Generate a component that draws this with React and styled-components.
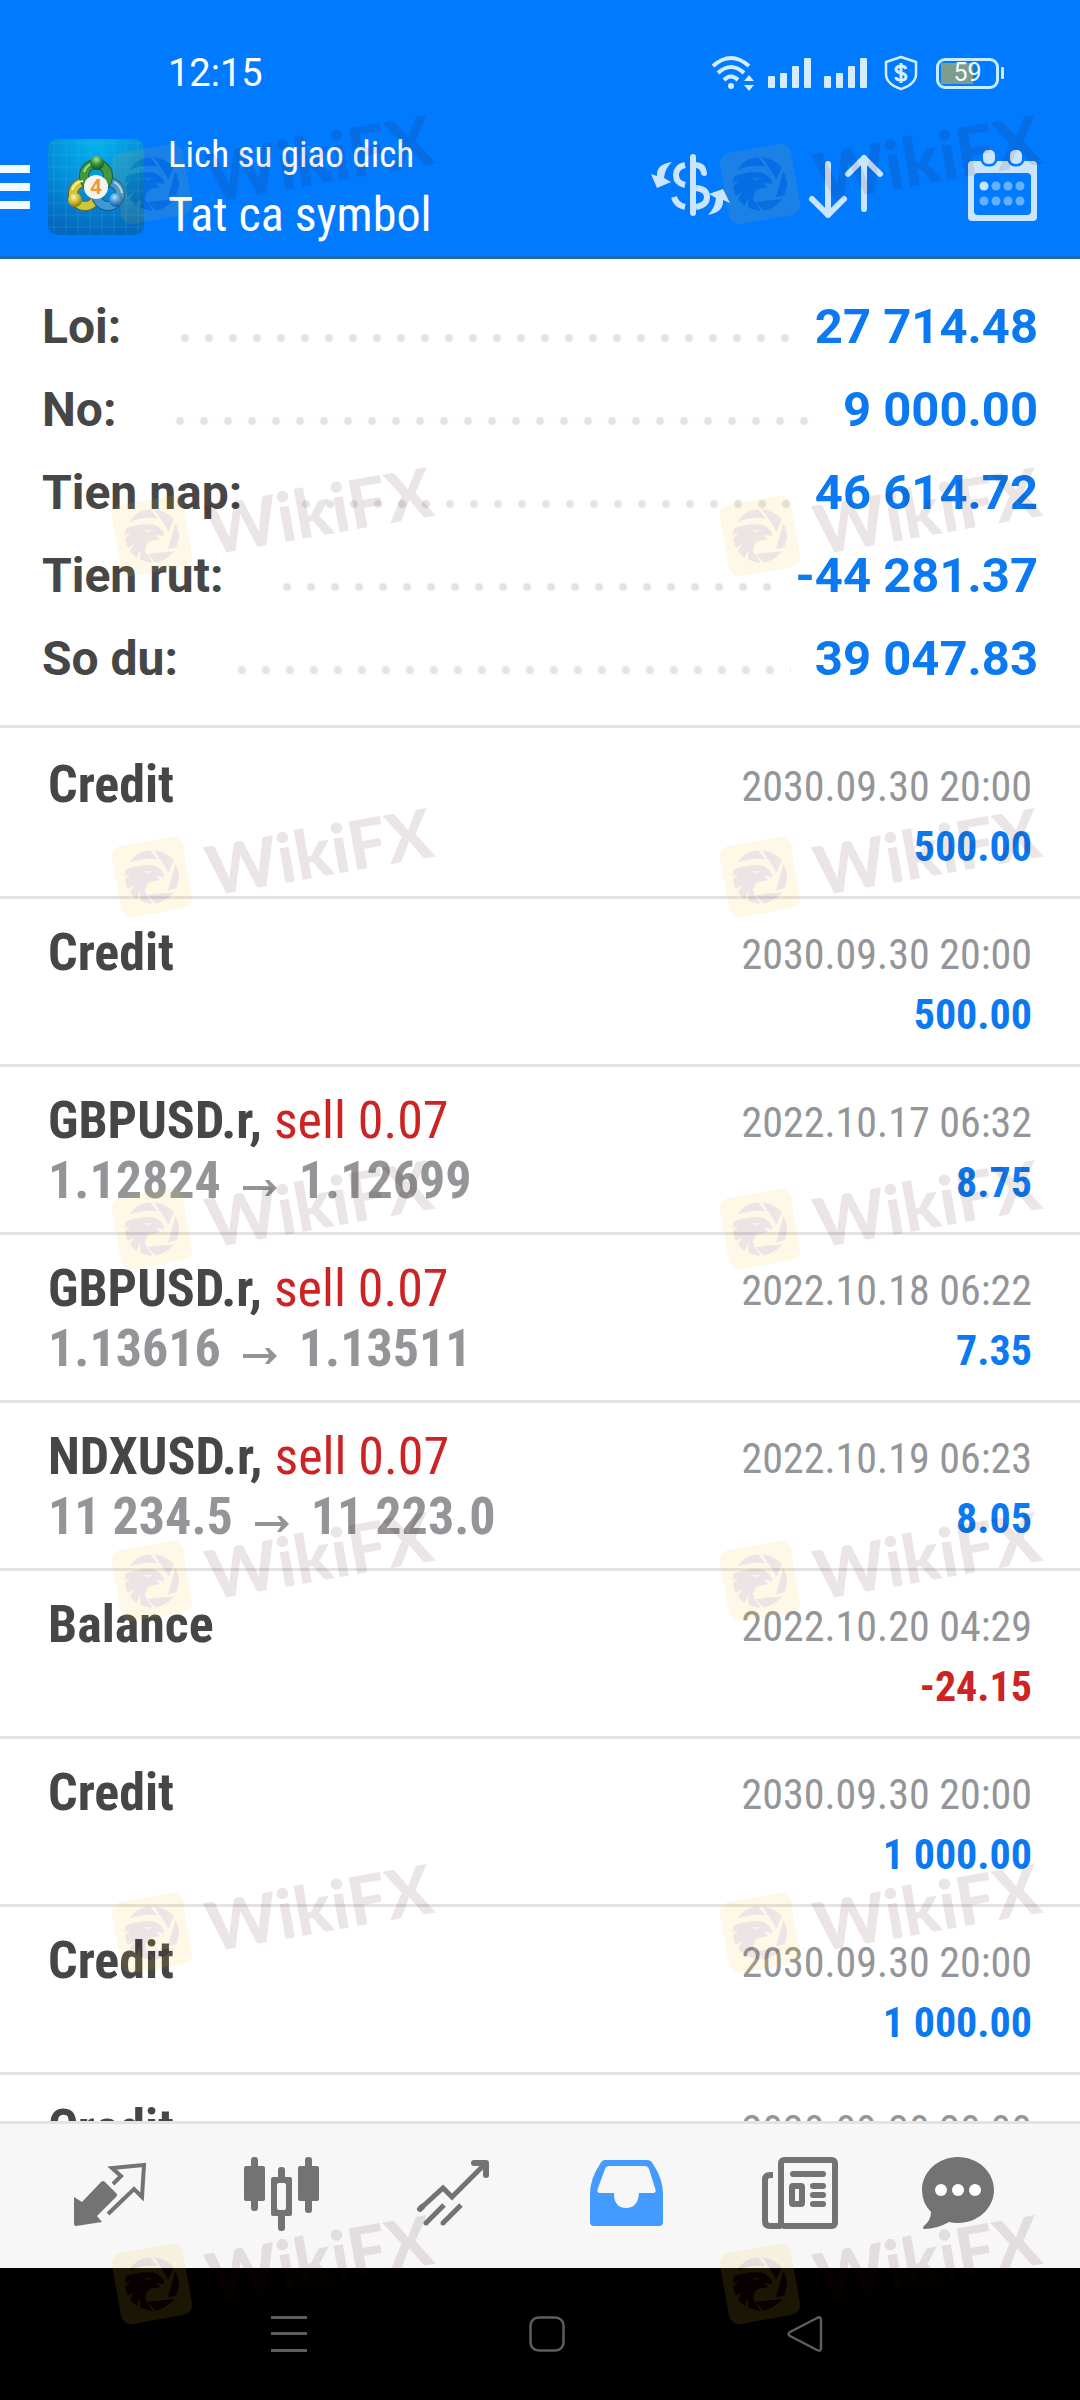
import React from "react"
import styled, { createGlobalStyle } from "styled-components"

const GlobalStyle = createGlobalStyle`
  * {
    box-sizing: border-box;
  }
  body {
    margin: 0;
    background: #ffffff;
    font-family: Roboto, "Liberation Sans", sans-serif;
  }
`

const Screen = styled.div`
  position: relative;
  display: flex;
  flex-direction: column;
  height: 100vh;
  overflow: hidden;
  background: #ffffff;
`

const Header = styled.header`
  flex: none;
  background: #007aff;
  color: #ffffff;
  border-bottom: 3px solid #1a6bbf;
`

const StatusBar = styled.div`
  display: flex;
  align-items: center;
  justify-content: space-between;
  height: 118px;
  padding: 28px 76px 0 168px;
`

const Clock = styled.time`
  font-size: 38px;
  line-height: 40px;
`

const StatusIcons = styled.div`
  display: flex;
  align-items: center;
  gap: 13px;
  color: #d3edff;
`

const BatteryGroup = styled.div`
  display: flex;
  align-items: center;
  gap: 2px;
`

const Battery = styled.div`
  display: flex;
  align-items: center;
  justify-content: center;
  width: 63px;
  height: 31px;
  border: 3px solid #c6ecff;
  border-radius: 9px;
  background: linear-gradient(#7f9c8c, #7f9c8c) 2px 2px / 32px 21px no-repeat;
  color: #eefaff;
  font-size: 25px;
  line-height: 26px;
`

const AppBar = styled.div`
  display: flex;
  align-items: center;
  height: 138px;
  padding-right: 30px;
`

const IconButton = styled.button`
  display: flex;
  align-items: center;
  justify-content: center;
  padding: 0;
  border: none;
  background: none;
  color: inherit;
`

const MenuButton = styled(IconButton)`
  width: 30px;
  height: 44px;
  flex-direction: column;
  justify-content: space-between;
`

const MenuBar = styled.span`
  width: 100%;
  height: 8px;
  background: #f2faff;
`

const Logo = styled.svg`
  width: 96px;
  height: 96px;
  margin: 0 24px 0 18px;
`

const Titles = styled.div`
  flex: 1;
  font-family: "Roboto Condensed", Roboto, sans-serif;
`

const ScreenName = styled.div`
  font-size: 37px;
  line-height: 56px;
`

const Filter = styled.h1`
  margin: 0;
  font-size: 48px;
  font-weight: 400;
  line-height: 64px;
`

const Actions = styled.div`
  display: flex;
  gap: 60px;
  color: #cce5ff;
`

const Summary = styled.dl`
  flex: none;
  margin: 0;
  padding: 26px 42px 25px;
  border-bottom: 3px solid #e3e3e3;
`

const SummaryRow = styled.div`
  display: flex;
  font-weight: 700;
  line-height: 83px;
`

const SummaryLabel = styled.dt`
  color: #464646;
  font-size: 48px;
`

const Leader = styled.span`
  flex: 1;
  margin: 0 24px 0 45px;
  background: radial-gradient(circle at 19px 53px, #e3e3e3 3px, transparent 5px) 0 0 / 24px 83px repeat-x;
`

const SummaryValue = styled.dd`
  margin: 0;
  color: #0a79f2;
  font-size: 49px;
`

const Deals = styled.ul`
  flex: 1;
  min-height: 0;
  margin: 0;
  padding: 3px 0 0;
  overflow: hidden;
  list-style: none;
  font-family: "Roboto Condensed", Roboto, sans-serif;
`

const Deal = styled.li`
  display: flex;
  justify-content: space-between;
  height: 168px;
  padding: 0 48px;
  border-bottom: 3px solid #e3e3e3;
  line-height: 60px;
`

const DealInfo = styled.div`
  padding-top: 24px;
  color: #464646;
  font-size: 52px;
  font-weight: 700;
`

const Side = styled.span`
  color: #cc2424;
  font-weight: 400;
`

const Prices = styled.div`
  display: flex;
  align-items: center;
  gap: 22px;
  color: #949599;
`

const Arrow = styled.svg`
  width: 34px;
  height: 16px;
  margin-top: 14px;
`

const DealResult = styled.div`
  padding-top: 26px;
  color: #949599;
  font-size: 42px;
  text-align: right;
`

const Amount = styled.div`
  color: ${(props) => (props.$loss ? "#cc2424" : "#0a79f2")};
  font-weight: 700;
`

const TabBar = styled.nav`
  flex: none;
  display: grid;
  grid-template-columns: repeat(6, 1fr);
  height: 147px;
  padding: 0 24px;
  border-top: 3px solid #e3e3e3;
  background: #f7f7f7;
`

const Tab = styled(IconButton)`
  color: ${(props) => (props.$active ? "#439bff" : "#737373")};
`

const SystemBar = styled.div`
  flex: none;
  display: grid;
  grid-template-columns: repeat(3, 1fr);
  height: 132px;
  padding: 0 146px 0 160px;
  background: #000000;
  color: #5e5e5e;
`

const Watermarks = styled.div`
  position: absolute;
  inset: 0;
  overflow: hidden;
  pointer-events: none;
`

const Watermark = styled.svg`
  position: absolute;
  top: ${(props) => props.$top}px;
  left: ${(props) => props.$left}px;
  width: 340px;
  height: 120px;
  overflow: visible;
`

const summary = [
  ["Loi:", "27 714.48"],
  ["No:", "9 000.00"],
  ["Tien nap:", "46 614.72"],
  ["Tien rut:", "-44 281.37"],
  ["So du:", "39 047.83"],
]

const deals = [
  { name: "Credit", date: "2030.09.30 20:00", amount: "500.00" },
  { name: "Credit", date: "2030.09.30 20:00", amount: "500.00" },
  { name: "GBPUSD.r,", side: "sell 0.07", open: "1.12824", close: "1.12699", date: "2022.10.17 06:32", amount: "8.75" },
  { name: "GBPUSD.r,", side: "sell 0.07", open: "1.13616", close: "1.13511", date: "2022.10.18 06:22", amount: "7.35" },
  { name: "NDXUSD.r,", side: "sell 0.07", open: "11 234.5", close: "11 223.0", date: "2022.10.19 06:23", amount: "8.05" },
  { name: "Balance", date: "2022.10.20 04:29", amount: "-24.15" },
  { name: "Credit", date: "2030.09.30 20:00", amount: "1 000.00" },
  { name: "Credit", date: "2030.09.30 20:00", amount: "1 000.00" },
  { name: "Credit", date: "2030.09.30 20:00", amount: "1 000.00" },
]

const watermarkRows = [144, 496, 837, 1189, 1541, 1893, 2244]
const watermarkColumns = [112, 720]

const WifiIcon = () => (
  <svg width="44" height="36" viewBox="0 0 44 36" fill="none" stroke="currentColor" strokeWidth="4">
    <path d="M2 11Q20 -5 38 11M7 18Q20 6 33 18M13 25Q20 18 27 25" />
    <circle cx="20" cy="31" r="3" fill="currentColor" stroke="none" />
    <path d="M33 26l5-6 5 6zM33 30h10l-5 6z" fill="currentColor" stroke="none" />
  </svg>
)

const SignalIcon = () => (
  <svg width="43" height="30" viewBox="0 0 43 30" fill="currentColor">
    <rect x="0" y="18" width="7" height="12" rx="1" />
    <rect x="12" y="15" width="7" height="15" rx="1" />
    <rect x="24" y="8" width="7" height="22" rx="1" />
    <rect x="36" y="0" width="7" height="30" rx="1" />
  </svg>
)

const ShieldIcon = () => (
  <svg width="43" height="36" viewBox="-4 0 43 36" fill="none" stroke="currentColor">
    <path d="M17 2L32 7V19Q32 29 17 34Q2 29 2 19V7Z" strokeWidth="2.5" strokeLinejoin="round" />
    <path d="M22 14Q21 11 17 11T12 14Q12 17 17 18T22 22Q22 25 17 25T12 22M17 8V28" strokeWidth="3" />
  </svg>
)

const BatteryTip = () => (
  <svg width="3" height="12" viewBox="0 0 3 12">
    <rect width="3" height="12" rx="1" fill="currentColor" />
  </svg>
)

const AppLogo = () => (
  <Logo viewBox="0 0 96 96" aria-hidden="true">
    <defs>
      <radialGradient id="logoSky" cx="50%" cy="0%" r="100%">
        <stop offset="0" stopColor="#04b4ee" />
        <stop offset="0.6" stopColor="#0488d6" />
        <stop offset="1" stopColor="#0468bd" />
      </radialGradient>
      <pattern id="logoGrid" width="12" height="12" patternUnits="userSpaceOnUse">
        <path d="M6 0V12M0 4H12" stroke="#4fc0f2" strokeOpacity="0.2" fill="none" />
      </pattern>
      <radialGradient id="ballGreen" cx="45%" cy="25%" r="75%">
        <stop offset="0" stopColor="#a9e29a" />
        <stop offset="0.5" stopColor="#35923a" />
        <stop offset="1" stopColor="#14541d" />
      </radialGradient>
      <radialGradient id="ballYellow" cx="40%" cy="30%" r="75%">
        <stop offset="0" stopColor="#fbf7a0" />
        <stop offset="0.5" stopColor="#cdbb31" />
        <stop offset="1" stopColor="#7d6c12" />
      </radialGradient>
      <radialGradient id="ballBlue" cx="40%" cy="30%" r="75%">
        <stop offset="0" stopColor="#b7e4fb" />
        <stop offset="0.5" stopColor="#3794d6" />
        <stop offset="1" stopColor="#0f4f8f" />
      </radialGradient>
    </defs>
    <rect width="96" height="96" rx="9" fill="url(#logoSky)" />
    <rect width="96" height="96" rx="9" fill="url(#logoGrid)" />
    <g fill="none">
      <circle cx="37" cy="55" r="12" stroke="#6f681a" strokeWidth="10" />
      <circle cx="37" cy="55" r="12" stroke="#d0c63c" strokeWidth="8" />
      <circle cx="60" cy="55" r="12" stroke="#1a5688" strokeWidth="10" />
      <circle cx="60" cy="55" r="12" stroke="#3f97d4" strokeWidth="8" />
      <circle cx="48" cy="37" r="12" stroke="#1c5f2b" strokeWidth="10" />
      <circle cx="48" cy="37" r="12" stroke="#41983f" strokeWidth="8" />
      <path d="M36 33Q38 26 46 24" stroke="#a4dd98" strokeWidth="2" />
      <path d="M24 51Q27 43 35 42" stroke="#f6f2a0" strokeWidth="2" />
      <path d="M66 43Q73 47 74 54" stroke="#aadcf7" strokeWidth="2" />
    </g>
    <circle cx="49" cy="24" r="7" fill="url(#ballGreen)" />
    <circle cx="27" cy="61" r="7" fill="url(#ballYellow)" />
    <circle cx="68" cy="61" r="7" fill="url(#ballBlue)" />
    <circle cx="48" cy="48" r="12" fill="#f4f4f2" />
    <text x="48" y="55" textAnchor="middle" fontSize="21" fontWeight="700" fontFamily="Roboto, sans-serif" fill="#f09a3c">4</text>
  </Logo>
)

const CurrencyIcon = () => (
  <svg width="96" height="96" viewBox="0 0 96 96" fill="none" stroke="currentColor" strokeWidth="6">
    <path d="M51 18V74" strokeLinecap="round" />
    <path d="M51 26Q61 25 62 34" strokeLinecap="round" />
    <path d="M54 49Q65 50 65 58T54 68" />
    <path d="M43 26Q34 28 34 36T43 46M32 58Q34 66 43 68" />
    <path d="M30 23Q14 25 15 37L9 35L15 49L29 43L22 39Q23 29 30 23ZM66 76Q82 73 81 61L88 64L81 50L67 55L74 59Q73 69 66 76Z" fill="currentColor" stroke="none" />
  </svg>
)

const SortIcon = () => (
  <svg width="96" height="96" viewBox="0 0 96 96" fill="none" stroke="currentColor" strokeWidth="6" strokeLinecap="round" strokeLinejoin="round">
    <path d="M30 25V76M14 60L30 76L46 60" />
    <path d="M66 70V19M50 35L66 19L82 35" />
  </svg>
)

const CalendarIcon = () => (
  <svg width="96" height="96" viewBox="0 0 96 96" fill="currentColor">
    <path fillRule="evenodd" d="M18 22H79Q83 22 83 26V78Q83 82 79 82H18Q14 82 14 78V26Q14 22 18 22ZM24 34Q20 34 20 38V72Q20 76 24 76H73Q77 76 77 72V38Q77 34 73 34Z" />
    <g stroke="#007aff" strokeWidth="5" paintOrder="stroke">
      <rect x="29" y="11" width="12" height="14" rx="5" />
      <rect x="56" y="11" width="12" height="14" rx="5" />
    </g>
    {[47, 62].map((y) =>
      [30, 42, 54, 66].map((x) => (
        <circle key={`${x}-${y}`} cx={x} cy={y} r="4.5" opacity={x === 30 && y === 47 ? 1 : 0.5} />
      ))
    )}
  </svg>
)

const ArrowIcon = () => (
  <Arrow viewBox="0 0 34 16" aria-label="to">
    <path d="M0 6H26L22 0H26L34 8L26 16H22L26 10H0Z" fill="currentColor" />
  </Arrow>
)

const TradeIcon = () => (
  <svg width="96" height="96" viewBox="0 0 96 96" fill="currentColor">
    <path d="M12 49L20 54L39 34Q41 32 43 34L54 45Q56 47 54 49L35 68L40 74L14 78Q12 78 12 76Z" />
    <path d="M51 36L59 28L50 20L82 17L80 49L72 41L46 66" fill="none" stroke="currentColor" strokeWidth="4" />
  </svg>
)

const QuotesIcon = () => (
  <svg width="96" height="96" viewBox="0 0 96 96" fill="currentColor">
    <rect x="17" y="9" width="7" height="54" rx="3" />
    <rect x="10" y="18" width="21" height="35" rx="2" />
    <rect x="71" y="9" width="7" height="56" rx="3" />
    <rect x="64" y="18" width="21" height="35" rx="2" />
    <rect x="44" y="19" width="7" height="64" rx="3" />
    <rect x="37" y="29" width="21" height="39" rx="2" />
    <rect x="43" y="35" width="9" height="27" rx="2" fill="#f7f7f7" />
  </svg>
)

const ChartIcon = () => (
  <svg width="96" height="96" viewBox="0 0 96 96" fill="none" stroke="currentColor" strokeWidth="5">
    <path d="M15 60L37 40L46 49L79 16" />
    <path d="M14 61L16 59M68 15H80V27" strokeWidth="6" strokeLinecap="round" strokeLinejoin="round" />
    <path d="M20 75L38 57M37 75L55 57" />
    <path d="M20 75h0M37 75h0" strokeLinecap="round" />
  </svg>
)

const HistoryIcon = () => (
  <svg width="96" height="96" viewBox="0 0 96 96" fill="currentColor">
    <path fillRule="evenodd" d="M27 12H69Q73 12 75 16Q85 31 85 46V74Q85 78 81 78H16Q12 78 12 74V46Q12 31 22 16Q24 12 27 12ZM31 18Q28 18 27 21L20 40Q18 45 22 45H36Q36 60 48 60T61 45H75Q79 45 77 40L71 21Q70 18 66 18Z" />
  </svg>
)

const NewsIcon = () => (
  <svg width="96" height="96" viewBox="0 0 96 96" fill="none" stroke="currentColor" strokeWidth="6">
    <rect x="31" y="12" width="54" height="66" rx="3" />
    <path d="M23 27H20Q15 27 15 32V73Q15 78 20 78H31" />
    <path d="M43 26H73M63 38H73M63 47H73M63 56H73" strokeLinecap="round" />
    <rect x="42" y="38" width="10" height="18" rx="1" />
  </svg>
)

/* the bubble sits left of its cell centre */
const ChatIcon = () => (
  <svg width="96" height="96" viewBox="0 0 96 96" fill="currentColor">
    <path d="M36 9C56 9 72 24 72 42S56 75 36 75Q31 75 27 74Q15 81 2 81Q0 80 2 78Q9 72 9 64Q0 55 0 42C0 24 16 9 36 9Z" />
    <g fill="#ffffff">
      <circle cx="19" cy="42" r="6" />
      <circle cx="36" cy="42" r="6" />
      <circle cx="53" cy="42" r="6" />
    </g>
  </svg>
)

const Eagle = () => (
  <g transform="translate(-12 -17) scale(0.3333)">
    <path d="M88 129Q108 94 151 91L172 118Q130 112 88 129ZM162 91Q198 96 221 121L205 158Q190 130 162 91ZM226 132Q240 158 236 182L229 205L204 211ZM142 225L222 217Q200 245 166 251Z" />
    <path
      fillRule="evenodd"
      d="M77 150Q100 136 145 136Q172 135 182 150Q193 158 192 172Q182 166 165 170L178 177Q180 184 172 182Q150 182 141 195Q130 212 142 228L158 251Q134 250 120 240L122 214Q110 228 113 238Q98 230 90 216L102 196Q90 202 84 206Q76 192 75 180L92 160Q82 164 75 170ZM133 153L158 154Q152 160 142 158Z"
    />
  </g>
)

const Mark = ({ top, left }) => (
  <Watermark $top={top} $left={left} viewBox="0 0 340 120" aria-hidden="true">
    <defs>
      <mask id="eagleCut">
        <rect x="-10" y="-10" width="110" height="110" fill="#ffffff" />
        <Eagle />
      </mask>
    </defs>
    <g mask="url(#eagleCut)">
      <rect x="4" y="4" width="72" height="72" rx="10" transform="rotate(-10 40 40)" fill="rgba(245,190,30,0.11)" />
    </g>
    <g fill="rgba(60,10,0,0.1)">
      <Eagle />
      <text x="99" y="59" transform="rotate(-10 99 59)" fontFamily="Lato, sans-serif" fontSize="68" fontWeight="900">WikiFX</text>
    </g>
  </Watermark>
)

const tabs = [
  { label: "Trade", icon: TradeIcon },
  { label: "Quotes", icon: QuotesIcon },
  { label: "Chart", icon: ChartIcon },
  { label: "History", icon: HistoryIcon, active: true },
  { label: "News", icon: NewsIcon },
  { label: "Messages", icon: ChatIcon },
]

const App = () => {
  return (
    <Screen>
      <GlobalStyle />
      <Header>
        <StatusBar>
          <Clock>12:15</Clock>
          <StatusIcons>
            <WifiIcon />
            <SignalIcon />
            <SignalIcon />
            <ShieldIcon />
            <BatteryGroup>
              <Battery>59</Battery>
              <BatteryTip />
            </BatteryGroup>
          </StatusIcons>
        </StatusBar>
        <AppBar>
          <MenuButton aria-label="Menu">
            <MenuBar />
            <MenuBar />
            <MenuBar />
          </MenuButton>
          <AppLogo />
          <Titles>
            <ScreenName>Lich su giao dich</ScreenName>
            <Filter>Tat ca symbol</Filter>
          </Titles>
          <Actions>
            <IconButton aria-label="Currency"><CurrencyIcon /></IconButton>
            <IconButton aria-label="Sort"><SortIcon /></IconButton>
            <IconButton aria-label="Period"><CalendarIcon /></IconButton>
          </Actions>
        </AppBar>
      </Header>

      <Summary>
        {summary.map(([label, value]) => (
          <SummaryRow key={label}>
            <SummaryLabel>{label}</SummaryLabel>
            <Leader />
            <SummaryValue>{value}</SummaryValue>
          </SummaryRow>
        ))}
      </Summary>

      <Deals>
        {deals.map((deal, i) => (
          <Deal key={i}>
            <DealInfo>
              <div>
                {deal.name} {deal.side && <Side>{deal.side}</Side>}
              </div>
              {deal.open && (
                <Prices>
                  {deal.open}
                  <ArrowIcon />
                  {deal.close}
                </Prices>
              )}
            </DealInfo>
            <DealResult>
              <div>{deal.date}</div>
              <Amount $loss={deal.amount.startsWith("-")}>{deal.amount}</Amount>
            </DealResult>
          </Deal>
        ))}
      </Deals>

      <TabBar>
        {tabs.map(({ label, icon: Icon, active }) => (
          <Tab key={label} aria-label={label} $active={active}>
            <Icon />
          </Tab>
        ))}
      </TabBar>

      <SystemBar>
        <IconButton aria-label="Recent apps">
          <svg width="36" height="36" viewBox="0 0 36 36" fill="currentColor">
            <path d="M0 0H36V3H0ZM0 16H36V19H0ZM0 33H36V36H0Z" />
          </svg>
        </IconButton>
        <IconButton aria-label="Home">
          <svg width="36" height="36" viewBox="0 0 36 36" fill="none" stroke="currentColor" strokeWidth="2.5">
            <rect x="1.5" y="1.5" width="33" height="33" rx="8" />
          </svg>
        </IconButton>
        <IconButton aria-label="Back">
          <svg width="36" height="36" viewBox="0 0 36 36" fill="none" stroke="currentColor" strokeWidth="2.5" strokeLinejoin="round">
            <path d="M30 2Q34 0 34 4V32Q34 36 30 34L3 20Q0 18 3 16Z" />
          </svg>
        </IconButton>
      </SystemBar>

      <Watermarks>
        {watermarkRows.map((top) =>
          watermarkColumns.map((left) => <Mark key={`${top}-${left}`} top={top} left={left} />)
        )}
      </Watermarks>
    </Screen>
  )
}

export default App
